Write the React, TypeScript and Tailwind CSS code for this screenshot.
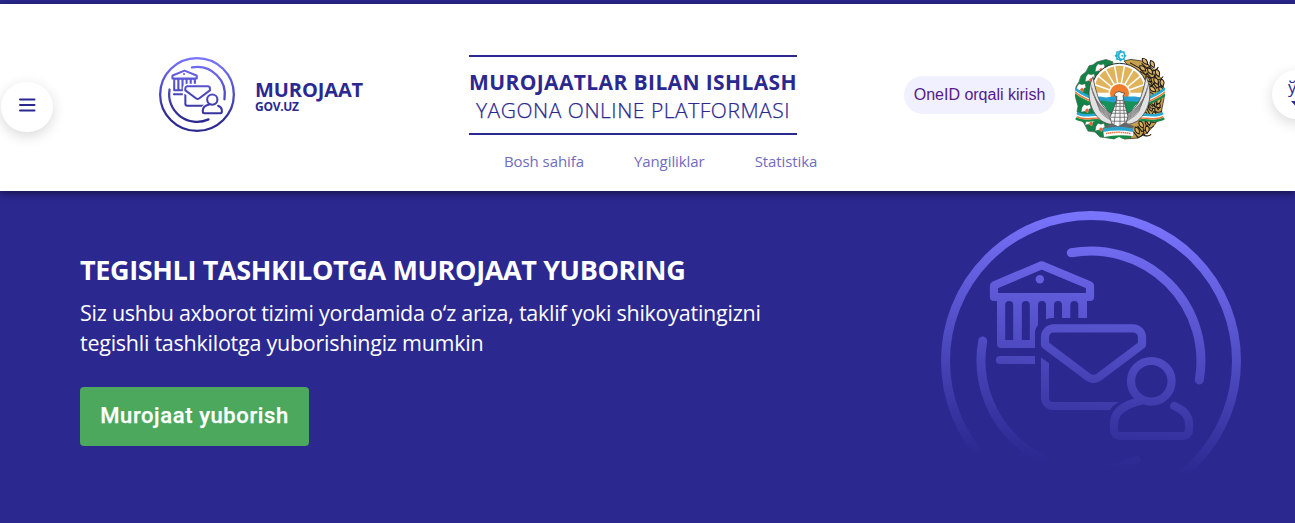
import React from "react";

const SEGOE = "font-['Segoe_UI','Open_Sans','Noto_Sans',sans-serif]";

function Mark({ id, className }: { id: string; className: string }) {
  const paint = `url(#${id})`;
  return (
    <svg viewBox="0 0 300 300" preserveAspectRatio="none" className={className} fill="none" aria-hidden="true">
      <defs>
        <linearGradient id={id} gradientUnits="userSpaceOnUse" x1="176" y1="0" x2="150" y2="255">
          <stop offset="0" stopColor="#7b76ff" />
          <stop offset="1" stopColor="#2b2890" />
        </linearGradient>
      </defs>
      <g stroke={paint} strokeWidth="9" strokeLinecap="round">
        <circle cx="150" cy="150" r="145.5" />
        <path d="M130.3 41.8A110 110 0 0 1 258.3 169" />
        <path d="M41.7 130A110 110 0 0 0 195.5 249.5" />
      </g>
      <g stroke={paint} strokeWidth="8.2" strokeLinejoin="round">
        <path d="M53 75.5Q53 74.5 54 74L100.7 54.3L148 74Q149 74.5 149 75.5V86H53Z" />
        <path d="M59 149H94" />
        <path d="M104 133.7V126a8.7 8.7 0 0 1 8.7-8.7H192a9 9 0 0 1 9 9V133.7L158 166Q152.5 170 147 166Z" />
        <circle cx="210.3" cy="170.3" r="20.3" />
        <path
          strokeLinecap="round"
          d="M199 190Q173 196 173 213V219a6 6 0 0 0 6 6H242a6 6 0 0 0 6-6V213Q248 201 233.3 195"
        />
      </g>
      <g fill={paint}>
        <circle cx="98.8" cy="68.2" r="4.2" />
        <circle cx="59" cy="149" r="4.1" />
        <path
          fillRule="evenodd"
          d="M56 86V133a4 4 0 0 0 4 4H94V122Q94 117 97 114V94a4 4 0 0 1 8 0V108.5q2-1.5 5-1.5H113V94a4 4 0 0 1 8 0V107H129.3V94a4 4 0 0 1 8 0V107H146V86ZM64.2 129V94a4 4 0 0 1 8 0V129ZM80.8 129V94a4 4 0 0 1 8 0V129Z"
        />
        <path d="M100 146.5L108 152.3V187a4 4 0 0 0 4 4H178Q172 194 169 199H112a12 12 0 0 1-12-12Z" />
      </g>
    </svg>
  );
}

const bolls = [
  [30, 23], [20, 33], [11, 43], [16, 64], [20, 77], [30, 83],
];

const grains = [
  [76, 18, 20], [83, 21, 35], [74, 25, 10], [81, 28, 25], [88, 30, 40], [80, 36, 10],
  [87, 38, 30], [92, 40, 55], [84, 46, 10], [92, 47, 30], [88, 63, 60], [81, 65, 40],
  [76, 72, 30], [88, 58, 80], [79, 79, 50], [72, 82, 30], [84, 73, 60], [83, 59, 60],
  [77, 87, 60], [68, 88, 30],
];

const rays = [-80, -60, -40, -20, 0, 20, 40, 60, 80];
const feathers = [0, 1, 2, 3, 4, 5, 6];

function Wing() {
  return (
    <g>
      <path d="M23 32C16 46 18 66 32 77C38 81 46 80 52 84L51 73C39 71 30 61 27 49C25 43 24 38 23 32Z" fill="#e2e2e2" stroke="#444" strokeWidth=".8" />
      {feathers.map((i) => (
        <path
          key={i}
          d={`M${20.5 + i * 1.4} ${39 + i * 4.2}C${23 + i * 1.4} ${55 + i * 2.8} ${33 + i} ${68 + i} 50 ${74 + i * 1.4}`}
          fill="none"
          stroke="#666"
          strokeWidth=".7"
        />
      ))}
    </g>
  );
}

function Ribbon({ d }: { d: string }) {
  return (
    <g fill="none">
      <path d={d} stroke="#188b47" strokeWidth="7" transform="translate(0 1)" />
      <path d={d} stroke="#fff" strokeWidth="4.2" />
      <path d={d} stroke="#ee7735" strokeWidth="1.4" transform="translate(0 1.3)" />
      <path d={d} stroke="#27a9d2" strokeWidth="2.6" transform="translate(0 -2.2)" />
    </g>
  );
}

function Emblem() {
  return (
    <svg viewBox="5 5 90 91" preserveAspectRatio="none" className="h-[90px] w-[90px] shrink-0" aria-hidden="true">
      <path
        d="M43 17L36 14.5L27 17L23 20L19 21L16 27L11 31L9 37L6 42L5.5 53L8 62L7 67L10 75L14 79L18 87L25 88L30 93L39 94L44 95L49 92L51 84L37 70L27 60L24 45L31 31L42 21Z"
        fill="#128246"
        stroke="#536358"
        strokeWidth=".7"
      />
      <path
        d="M54 16L61 14.5L71 16L79 20L86 27L91 34L94 44L94 54L91 69L85 80L77 89L68 94L54 95L51 85L65 72L75 58L76 46L68 31Z"
        fill="#c7a04d"
        stroke="#332b1c"
        strokeWidth=".8"
      />
      <g stroke="#191714" strokeWidth="1">
        {grains.map(([x, y, r], i) => (
          <g key={i} transform={`translate(${x} ${y}) rotate(${r})`}>
            <path d="M-5-3Q0-5 2 1Q-4 2-5-3ZM5-2Q6 2 2 5" fill="#deb566" />
            <path d="M-4 2L3 5" fill="none" />
          </g>
        ))}
        <path d="M60 18L69 23L78 32L83 42" fill="none" />
      </g>
      {bolls.map(([x, y], i) => (
        <g key={i} transform={`translate(${x} ${y})`}>
          <path d="M-4-1L-2-4L1-3L4-4L5 0L3 1L2 5L-1 3L-5 4Z" fill="#fff" stroke="#325d44" strokeWidth=".5" />
          <path d="M1 0L3 2L1 5L-1 2Z" fill="#e76932" />
        </g>
      ))}
      <Ribbon d="M5 46C11 52 17 53 24 57" />
      <Ribbon d="M95 46C89 52 83 53 76 57" />
      <Ribbon d="M7 71C15 76 23 71 31 73" />
      <Ribbon d="M93 71C85 76 77 71 69 73" />
      <circle cx="49.5" cy="46.5" r="28" fill="#fff" stroke="#262b2d" strokeWidth="1" />
      <clipPath id="emblem-disc">
        <circle cx="49.5" cy="46" r="25" />
      </clipPath>
      <g clipPath="url(#emblem-disc)">
        {rays.map((a) => (
          <path key={a} d="M48.3 38L44.8 18H54.2L50.7 38Z" fill="#dfb45d" transform={`rotate(${a} 49.5 49)`} />
        ))}
        <circle cx="49.5" cy="49" r="9.5" fill="#f17d2c" />
        <path d="M20 54L30 52L36 53L43 52L56 52L65 52L78 54V70H20Z" fill="#249fd0" />
        <path d="M22 58L33 56L43 58L50 56L61 57L77 58L71 74H28Z" fill="#169159" />
        <path d="M29 59Q38 64 36 72M70 59Q61 64 63 72" fill="none" stroke="#d8e5e4" strokeWidth="2" />
      </g>
      <Wing />
      <g transform="translate(99 0) scale(-1 1)">
        <Wing />
      </g>
      <path d="M44 51Q45 47 49 47L55 49L53 51L54 57L58 72L55 83H43L40 73L46 58L47 52Z" fill="#f7f7f7" stroke="#444" strokeWidth=".8" />
      <path d="M47 56H53M46 59H54M45 62H55M43 66H56M42 69H57M41 73H58M42 77H57M47 55L44 80M50 56V83M53 55L55 80" fill="none" stroke="#666" strokeWidth=".8" />
      <path d="M35 82L42 79L48 82L55 78L64 82L62 86H37Z" fill="#666" />
      <path d="M34 87Q49 84 62 87L61 94L53 95L49 93L44 95L36 94Z" fill="#138a48" />
      <path d="M33 85Q49 82 63 85V92Q48 90 34 93Z" fill="#fff" />
      <path d="M33 84.5Q49 80.5 63 84.5V88Q48 85 33 88Z" fill="#2aa4ce" />
      <path d="M36 89.5Q48 87 61 89.5" stroke="#ed7440" strokeWidth="1.5" strokeDasharray="1.4 .5" fill="none" />
      <g transform="translate(50.5 10.7)" fill="#27acd3">
        <rect x="-4.3" y="-4.3" width="8.6" height="8.6" />
        <rect x="-4.3" y="-4.3" width="8.6" height="8.6" transform="rotate(45)" />
        <circle r="3.4" fill="#fff" />
        <path d="M2-3A3.5 3.5 0 1 0 2 3A2.8 2.8 0 1 1 2-3Z" />
        <circle cx="1.8" r="1" />
      </g>
    </svg>
  );
}

export default function App() {
  return (
    <div className={`relative h-[523px] w-full overflow-hidden bg-[#2b2890] pt-1 ${SEGOE}`}>
      <header className="relative flex h-[187px] items-start bg-white shadow-[0_2px_8px_rgba(0,0,0,0.55)]">
        <a className="ml-[159px] mt-[53px] flex w-[310px] items-start text-[#2b2890]" href="#">
          <Mark id="brand-paint" className="h-[75px] w-[76px]" />
          <span className="ml-5 mt-[23px] flex flex-col font-bold">
            <span className="text-[20px] leading-5 tracking-[-0.1px]">MUROJAAT</span>
            <span className="text-[12px] leading-[14px] tracking-[-0.3px]">GOV.UZ</span>
          </span>
        </a>
        <div className="mt-[51px] w-[328px] text-[#2b2890]">
          <div className="flex h-20 flex-col items-center border-y-2 border-[#2b2890] pt-[11px] text-center">
            <strong className="whitespace-nowrap text-[21px] font-bold leading-7 tracking-[0.38px]">MUROJAATLAR BILAN ISHLASH</strong>
            <span className="whitespace-nowrap text-[21px] font-light leading-7 tracking-[0.53px] [-webkit-text-stroke:0.25px_#2b2890]">YAGONA ONLINE PLATFORMASI</span>
          </div>
          <nav className="ml-[35px] mt-[16px] flex w-[320px] gap-[50px] whitespace-nowrap text-[15px] leading-5 tracking-[-0.08px] text-[#706cc1]">
            <a href="#">Bosh sahifa</a>
            <a href="#">Yangiliklar</a>
            <a href="#">Statistika</a>
          </nav>
        </div>
        <a
          className="ml-[107px] mt-[72px] flex h-[38px] w-[151px] items-center justify-center whitespace-nowrap rounded-full bg-[#f1f0ff] font-['Liberation_Sans',Arial,sans-serif] text-[16px] text-[#551a8b]"
          href="#"
        >
          OneID orqali kirish
        </a>
        <div className="ml-5 mt-[46px]">
          <Emblem />
        </div>
      </header>

      <button className="absolute left-px top-[82px] flex h-[50px] w-[52px] items-center justify-center rounded-full bg-white shadow-[0_4px_14px_rgba(0,0,0,0.15)]" aria-label="Menyu">
        <svg className="mb-[2px] h-4 w-[18px]" viewBox="0 0 18 16" stroke="#2b2890" strokeWidth="2" strokeLinecap="round">
          <path d="M2 1.5H16.5M2 7H16.5M2 12.5H16.5" />
        </svg>
      </button>
      <button className="absolute left-[1272px] top-[70px] h-[49px] w-[49px] rounded-full bg-white shadow-[0_4px_14px_rgba(0,0,0,0.15)]">
        <span className="-mt-[6px] flex flex-col items-start pl-4 text-[17px] leading-5 text-[#2b2890]">
          ў
          <svg className="ml-[3px] mt-[4px] h-[5px] w-[9px]" viewBox="0 0 9 5" fill="#2b2890">
            <path d="M0 0H9L4.5 5Z" />
          </svg>
        </span>
      </button>

      <main className="flex h-[332px] items-start pl-20 text-white">
        <section className="mt-[61px] w-[861px]">
          <h1 className="whitespace-nowrap text-[27px] font-bold leading-9 tracking-[-0.37px]">TEGISHLI TASHKILOTGA MUROJAAT YUBORING</h1>
          <p className="mt-[10px] whitespace-nowrap text-[21.5px] leading-[30px] tracking-[-0.25px]">
            Siz ushbu axborot tizimi yordamida o‘z ariza, taklif yoki shikoyatingizni
            <br />
            tegishli tashkilotga yuborishingiz mumkin
          </p>
          <button className="mt-[29px] flex h-[59px] w-[229px] items-center justify-center whitespace-nowrap rounded bg-[#4ca85d] pb-[2px] font-[Roboto,sans-serif] text-[22px] font-medium tracking-[0.6px] [-webkit-text-stroke:0.25px_white]">
            Murojaat yuborish
          </button>
        </section>
        <Mark id="hero-paint" className="mt-5 h-[300px] w-[300px] shrink-0" />
      </main>
    </div>
  );
}
